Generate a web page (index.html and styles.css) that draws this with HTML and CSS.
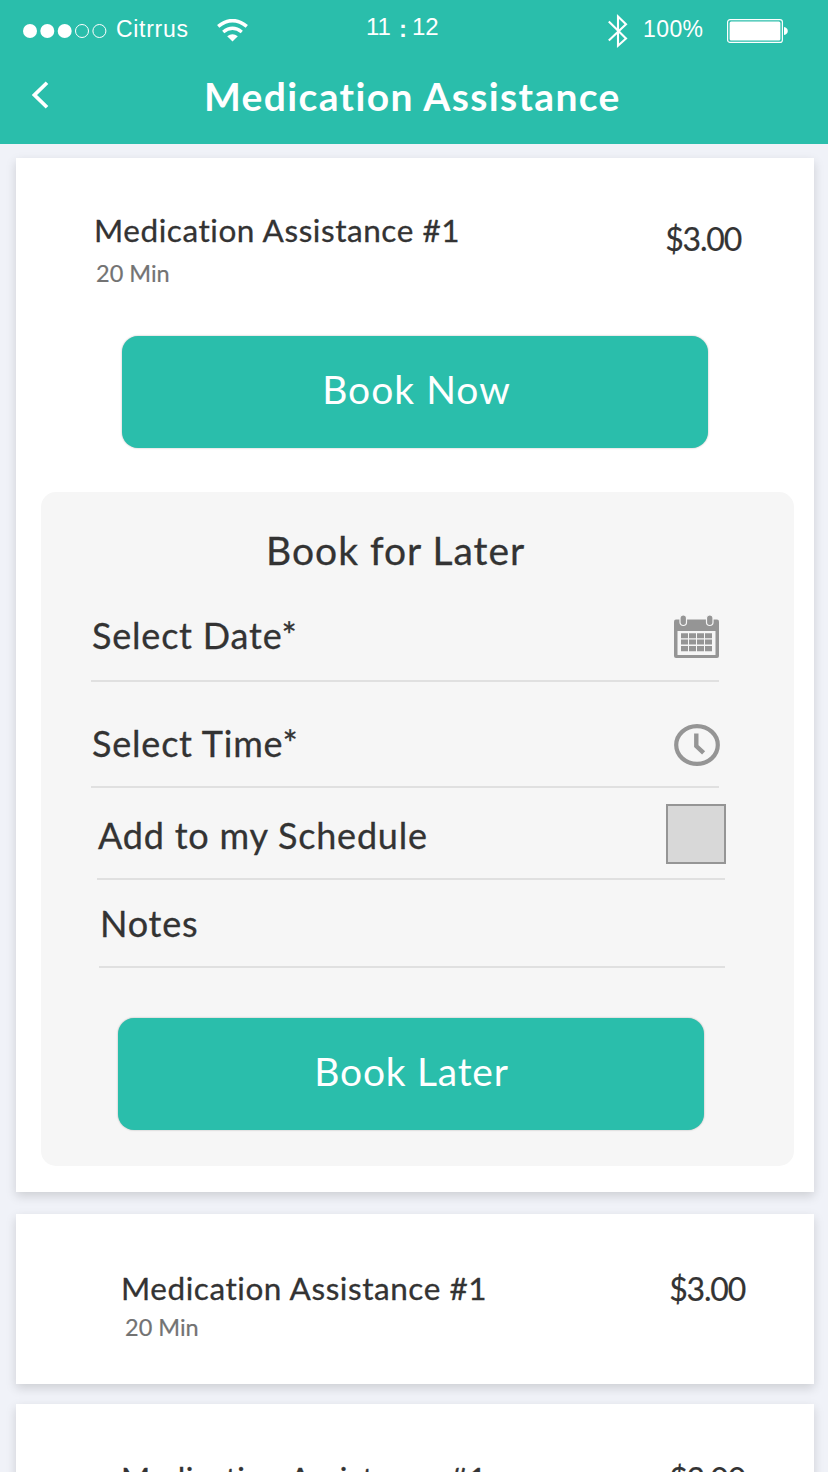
FILE: index.html
```html
<!DOCTYPE html>
<html lang="en">
<head>
<meta charset="utf-8">
<title>Medication Assistance</title>
<link rel="stylesheet" href="styles.css">
</head>
<body>
<header class="header">
  <div class="status">
    <svg class="signal" width="86" height="16" viewBox="0 0 86 16"><g fill="#fff"><circle cx="7" cy="8" r="7"/><circle cx="24.3" cy="8" r="7"/><circle cx="41.7" cy="8" r="7"/></g><g fill="none" stroke="#fff"><circle cx="59" cy="8" r="6.5"/><circle cx="76.4" cy="8" r="6.5"/></g></svg>
    <span class="carrier">Citrrus</span>
    <svg class="wifi" width="32" height="24" viewBox="0 0 32 24"><g fill="none" stroke="#fff"><path d="M1.2 7.4Q15.5-4.2 29.8 7.4" stroke-width="3.5"/><path d="M6.2 13Q15.5 5.6 24.8 13" stroke-width="3.4"/></g><path d="M10.2 17.200Q15.5 13.400 20.8 17.200L15.5 22.5Z" fill="#fff"/></svg>
    <span class="clock"><span>11</span><span class="colon">:</span><span>12</span></span>
    <svg class="bluetooth" width="20" height="36" viewBox="0 0 20 36"><path d="M.8 8.5 18 25.5 10 32.7V3.5L18 11.2.8 27.5" fill="none" stroke="#fff" stroke-width="2.1"/></svg>
    <span class="percent">100%</span>
    <svg class="battery" width="62" height="24" viewBox="0 0 62 24"><rect x=".6" y=".6" width="54.8" height="22.8" rx="2.5" fill="none" stroke="#fff" stroke-width="1.2"/><rect x="2.6" y="2.6" width="50.8" height="18.8" rx="1.5" fill="#fff"/><path d="M57 8C62 8.5 62 15.500 57 16Z" fill="#fff"/></svg>
  </div>
  <nav class="nav">
    <svg class="back" width="18" height="28" viewBox="0 0 18 28"><path d="M15 1.8 2.5 14 15 26.200" fill="none" stroke="#fff" stroke-width="3.700"/></svg>
    <h1 class="heading">Medication Assistance</h1>
  </nav>
</header>
<main class="list">
  <section class="card card-open">
    <div class="summary">
      <div class="info"><h2 class="name">Medication Assistance #1</h2><p class="length">20 Min</p></div>
      <span class="price">$3.00</span>
    </div>
    <button class="button button-now">Book Now</button>
    <form class="later">
      <h3 class="later-title">Book for Later</h3>
      <div class="field date"><span class="label">Select Date*</span>
        <svg class="calendar" width="45" height="44" viewBox="0 0 45 44"><rect y="4.500" width="45" height="38.500" rx="2" fill="#959595"/><path d="M3.500 16h38v24h-38z" fill="#f6f6f6"/><g stroke="#f6f6f6" stroke-width="1.200" fill="#959595"><rect x="6" y="0" width="6.500" height="10.500" rx="3.200"/><rect x="32.500" y="0" width="6.500" height="10.500" rx="3.200"/></g><path d="M7 18.200h7v5H7zm8 0h7v5h-7zm8 0h7v5h-7zm8 0h7v5h-7zM7 24.600h7v5H7zm8 0h7v5h-7zm8 0h7v5h-7zm8 0h7v5h-7zM7 31h7v5.200H7zm8 0h7v5.200h-7zm8 0h7v5.200h-7zm8 0h7v5.200h-7z" fill="#959595"/></svg>
      </div>
      <div class="field time"><span class="label">Select Time*</span>
        <svg class="dial" width="46" height="42" viewBox="0 0 46 42"><ellipse cx="23" cy="21" rx="20.800" ry="18.900" fill="none" stroke="#959595" stroke-width="4.200"/><path d="M22.300 9.500V22L29.600 28.900" fill="none" stroke="#959595" stroke-width="4.400"/></svg>
      </div>
      <div class="field schedule"><span class="label">Add to my Schedule</span><span class="checkbox"></span></div>
      <div class="field notes"><span class="label">Notes</span></div>
      <button class="button button-later">Book Later</button>
    </form>
  </section>
  <section class="card card-closed">
    <div class="info"><h2 class="name">Medication Assistance #1</h2><p class="length">20 Min</p></div>
    <span class="price">$3.00</span>
  </section>
  <section class="card card-closed">
    <div class="info"><h2 class="name">Medication Assistance #1</h2><p class="length">20 Min</p></div>
    <span class="price">$3.00</span>
  </section>
</main>
</body>
</html>
```
FILE: styles.css
```css
* { box-sizing: border-box; }
h1, h2, h3, p { margin: 0; font-weight: 400; }
svg { display: block; flex: none; }
body {
  margin: 0;
  width: 828px;
  height: 1472px;
  overflow: hidden;
  background: #f0f2f8;
  color: #333;
  font-family: Lato, sans-serif;
  white-space: nowrap;
}
.header { height: 144px; background: #2abeab; color: #fff; }
.status {
  display: flex;
  height: 60px;
  font: 23px/28px "Liberation Sans", Arial, sans-serif;
}
.signal { margin: 23px 0 0 23px; }
.carrier { width: 107px; padding: 15px 0 0 7px; letter-spacing: .7px; }
.wifi { margin-top: 19px; margin-left: 1px; }
.clock { display: flex; width: 82px; margin-left: 117px; padding-top: 13px; font-size: 24px; }
.colon { margin: 2px 5px 0 8px; font-weight: 700; }
.bluetooth { margin: 13px 0 0 160px; }
.percent { width: 84px; padding: 15px 0 0 15px; letter-spacing: .4px; }
.battery { margin: 19px 0 0 15px; }
.nav { display: flex; height: 84px; }
.back { margin: 21px 0 0 32px; }
.heading { margin: 12px 0 0 154px; font-size: 39px; font-weight: 700; line-height: 48px; letter-spacing: 1.35px; }

.list { display: flex; flex-direction: column; padding: 14px 14px 0 16px; }
.card { flex: none; background: #fff; box-shadow: 0 4px 10px rgba(0, 0, 0, .15); }
.card-open { height: 1034px; padding: 52px 20px 0 25px; margin-bottom: 22px; }
.summary { display: flex; justify-content: space-between; height: 126px; padding: 0 53px 0 53px; }
.name { font-size: 31.5px; line-height: 40px; letter-spacing: .56px; -webkit-text-stroke: .3px; }
.length { margin: 8px 0 0 2px; font-size: 23.5px; line-height: 30px; color: #737373; letter-spacing: 0; -webkit-text-stroke: .2px; }
.price { margin-top: 9px; font-size: 32px; line-height: 40px; letter-spacing: -1.2px; -webkit-text-stroke: .2px; }

.button {
  display: block;
  width: 586px;
  height: 112px;
  padding: 0 0 6px 3px;
  border: 0;
  border-radius: 16px;
  background: #2abeab;
  box-shadow: 0 0 2px rgba(0, 0, 0, .3);
  color: #fff;
  font: 39px/48px Lato, sans-serif;
  letter-spacing: 1px;
}
.button-now { margin: 0 0 44px 81px; }
.later { height: 674px; padding: 34px 68px 0 50px; border-radius: 15px; background: #f6f6f6; }
.later-title { height: 78px; margin-left: 175px; font-size: 39px; line-height: 48px; letter-spacing: 1px; -webkit-text-stroke: .3px; }
.field { display: flex; justify-content: space-between; border-bottom: 2px solid #e0e0e0; }
.label { font-size: 36px; line-height: 44px; letter-spacing: .8px; -webkit-text-stroke: .3px; }
.date, .time { width: 628px; padding-left: 1px; }
.date { height: 78px; padding-top: 9px; }
.calendar { margin-top: 2px; }
.time { height: 106px; padding-top: 39px; }
.dial { margin: 3px -1px 0 0; }
.schedule { width: 628px; height: 92px; margin-left: 6px; padding: 16px 0 0 1px; }
.schedule .label { padding-top: 9px; }
.checkbox { width: 60px; height: 60px; margin-right: -1px; border: 2px solid #959595; background: #d8d8d8; }
.notes { width: 626px; height: 88px; margin-left: 8px; padding: 21px 0 0 1px; }
.button-later { margin: 50px 0 0 27px; padding-left: 1px; letter-spacing: .75px; }

.card-closed { display: flex; justify-content: space-between; height: 170px; margin-bottom: 20px; padding: 54px 69px 0 105px; }
.card-closed .length { margin: 4px 0 0 4px; }
.card-closed .price { margin-top: 1px; }
```
